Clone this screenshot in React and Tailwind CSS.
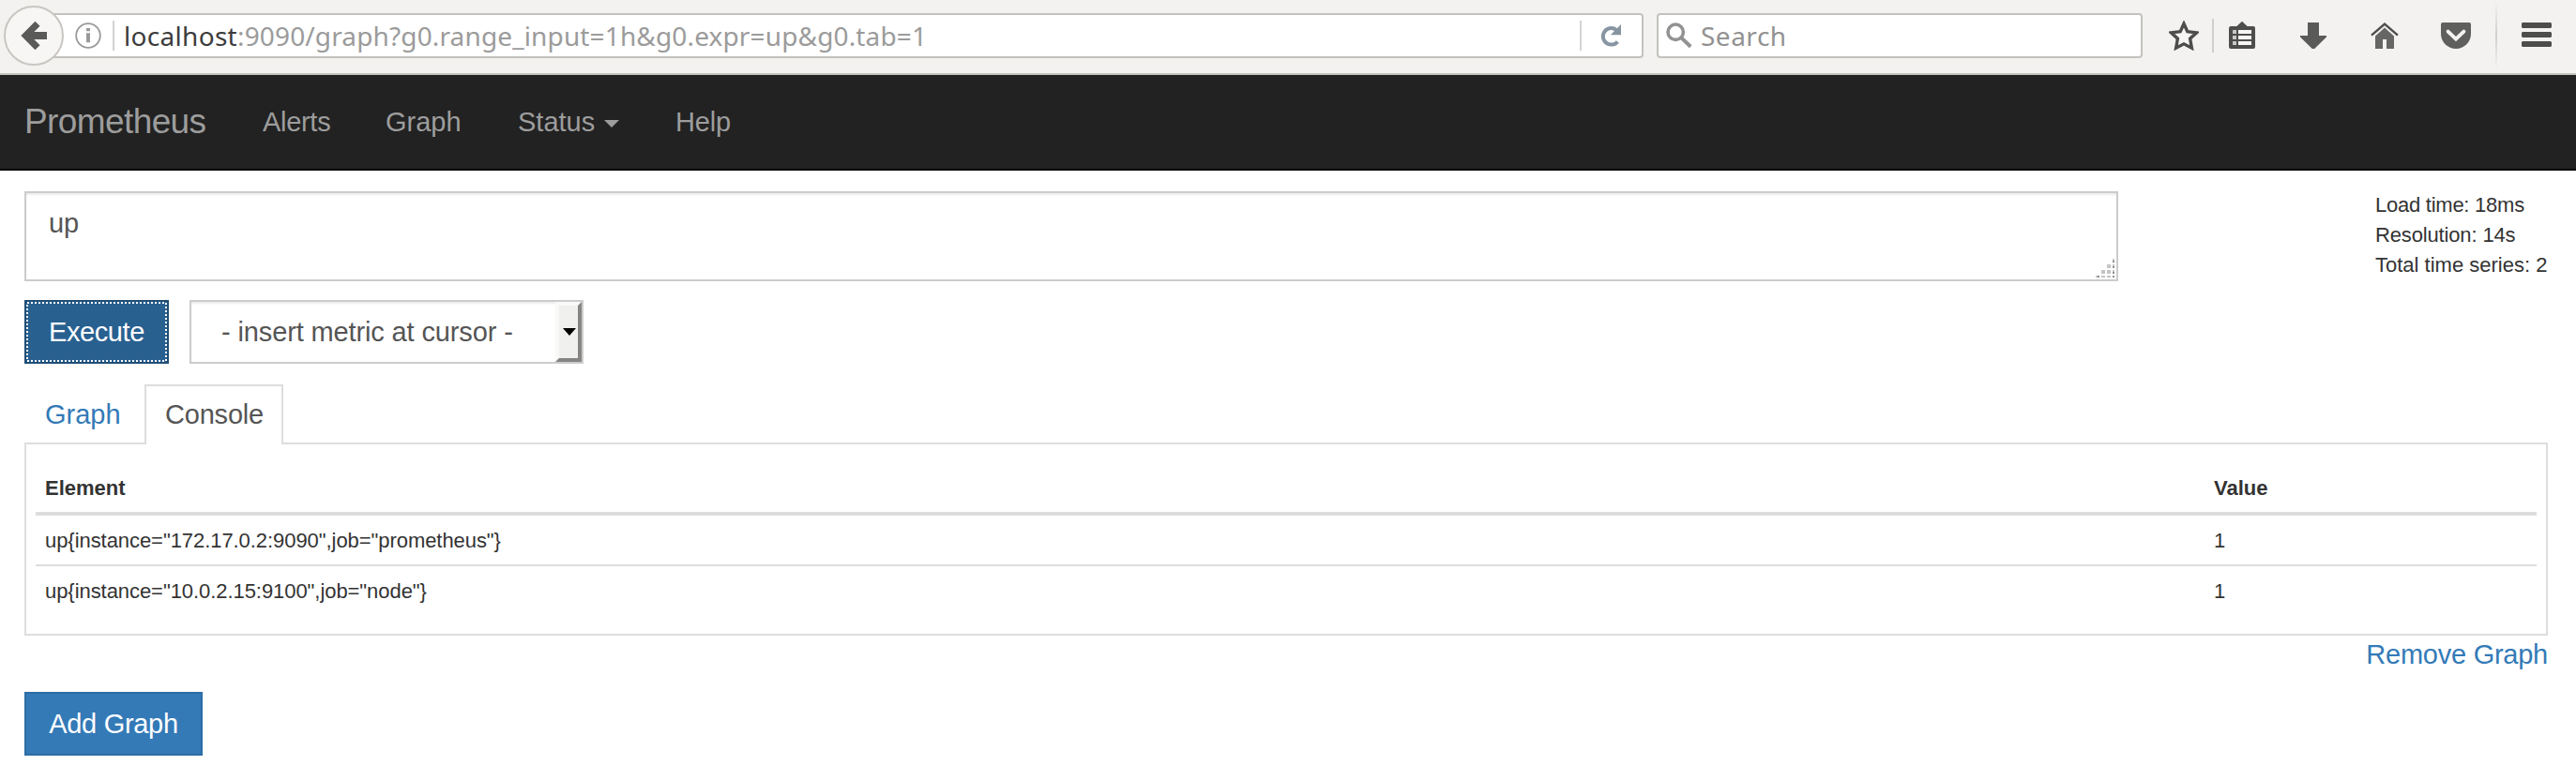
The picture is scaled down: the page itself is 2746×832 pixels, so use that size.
const SANS = "font-['Liberation_Sans',Arial,sans-serif]";
const UI = "font-['Noto_Sans',sans-serif]";

function ToolIcon({ className, children, w = 16, h = 16 }) {
  return (
    <svg className={`shrink-0 ${className}`} viewBox={`0 0 ${w} ${h}`} width={w * 2} height={h * 2}>
      {children}
    </svg>
  );
}

function Toolbar() {
  return (
    <header className={`flex h-[80px] items-start border-b-2 border-[#c4c2be] bg-[#f3f2f0] ${UI}`}>
      <div className="z-10 ml-[4px] mt-[6px] flex h-[64px] w-[64px] shrink-0 items-center justify-center rounded-full border-2 border-[#c9c6c2] bg-[#f7f6f5]">
        <ToolIcon w={14} h={16}>
          <path d="M9 1.6 2.7 8 9 14.4" fill="none" stroke="#5a5a59" strokeWidth="3.6" />
          <path d="M3.6 6h10.4v4H3.6z" fill="#5a5a59" />
        </ToolIcon>
      </div>
      <div className="-ml-[14px] mt-[14px] flex h-[48px] w-[1698px] shrink-0 items-center rounded-r-[4px] border-2 border-[#c4c2be] bg-white">
        <ToolIcon w={14} h={14} className="ml-[24px]">
          <circle cx="7" cy="7" r="6.4" fill="none" stroke="#999" strokeWidth="0.9" />
          <path d="M6 3h2v1.6H6zM6 5.6h2v5H6z" fill="#999" />
        </ToolIcon>
        <div className="ml-[12px] h-[32px] w-[2px] bg-[#d4d4d4]" />
        <div className="ml-[10px] grow whitespace-pre text-[28px] leading-[44px] text-[#9b9b9b]">
          <span className="tracking-[0.3px] text-[#3c3c3c]">localhost</span>
          <span className="tracking-[0.14px]">:9090/graph?g0.range_input=1h&amp;g0.expr=up&amp;g0.tab=1</span>
        </div>
        <div className="mr-[20px] h-[32px] w-[2px] bg-[#d4d4d4]" />
        <ToolIcon w={11} h={12} className="mr-[22px]">
          <path d="M9.2 9.2A4.4 4.4 0 1 1 8.6 3" fill="none" stroke="#8795a3" strokeWidth="2" />
          <path d="M11 0v5.6H5.4z" fill="#8795a3" />
        </ToolIcon>
      </div>
      <div className="ml-[14px] mt-[14px] flex h-[48px] w-[518px] shrink-0 items-center rounded-[4px] border-2 border-[#c4c2be] bg-white">
        <ToolIcon w={14} h={14} className="ml-[8px]">
          <circle cx="5.1" cy="5.1" r="4.1" fill="none" stroke="#929292" strokeWidth="1.8" />
          <path d="m8.2 8.2 4.9 4.7" stroke="#929292" strokeWidth="2" />
        </ToolIcon>
        <span className="ml-[9px] text-[28px] leading-[44px] tracking-[0.5px] text-[#929292]">Search</span>
      </div>
      <ToolIcon className="ml-[28px] mt-[22px]">
        <path
          d="m8 1.6 1.9 4.2 4.9.6-3.5 3.2.9 5L8 12.4l-4.2 2.2.9-5L1.2 6.4l4.9-.6z"
          fill="#f7f6f5"
          stroke="#4d4d4c"
          strokeWidth="1.7"
        />
      </ToolIcon>
      <div className="ml-[14px] mt-[20px] h-[36px] w-[2px] shrink-0 bg-[#d0cfcd]" />
      <ToolIcon w={14} h={15} className="ml-[16px] mt-[22px]">
        <path d="M1 3h3.2L7 .4 9.8 3H13a1 1 0 0 1 1 1v10a1 1 0 0 1-1 1H1a1 1 0 0 1-1-1V4a1 1 0 0 1 1-1z" fill="#4d4d4c" />
        <path d="M2 5h2v2H2zM2 8h2v2H2zM2 11h2v2H2z" fill="#c9c8c7" />
        <path d="M5 5h7v2H5zM5 8h7v2H5zM5 11h7v2H5z" fill="#f7f6f5" />
      </ToolIcon>
      <ToolIcon w={14} h={14} className="ml-[48px] mt-[24px]">
        <path d="M4 0h6v7h4v.8L7.6 14H6.4L0 7.8V7h4z" fill="#5a5a59" />
      </ToolIcon>
      <ToolIcon w={15} h={14} className="ml-[47px] mt-[24px]">
        <path d="M.5 6.8 7.5.8l7 6" fill="none" stroke="#4d4d4c" strokeWidth="1.2" />
        <path d="m7.5 2.8 5 4.4V14h-4V9h-2v5h-4V7.2z" fill="#666665" />
      </ToolIcon>
      <ToolIcon w={16} h={14} className="ml-[45px] mt-[24px]">
        <path d="M1 0h14a1 1 0 0 1 1 1v5a8 8 0 0 1-16 0V1a1 1 0 0 1 1-1z" fill="#5f5f5e" />
        <path d="M3.8 4.8 8 8.8l4.2-4" fill="none" stroke="#f3f2f0" strokeWidth="2" strokeLinecap="round" />
      </ToolIcon>
      <div className="ml-[26px] mt-[2px] h-[72px] w-[2px] shrink-0 bg-linear-to-b from-transparent via-[#cfcecc] to-transparent" />
      <ToolIcon w={16} h={13} className="ml-[26px] mt-[24px]">
        <path
          d="M.5 0h15l.5.5v2l-.5.5H.5L0 2.500v-2zM.5 5h15l.5.5v2l-.5.5H.5L0 7.500v-2zM.5 10h15l.5.5v2l-.5.5H.5l-.5-.5v-2z"
          fill="#4d4d4c"
        />
      </ToolIcon>
    </header>
  );
}

function Navbar() {
  return (
    <nav className="flex h-[102px] items-center border-b-2 border-[#080808] bg-[#222] pl-[26px] text-[#9d9d9d]">
      <a className="w-[254px] text-[37px] tracking-[-0.6px]">Prometheus</a>
      <a className="w-[131px] tracking-[-0.3px]">Alerts</a>
      <a className="w-[141px]">Graph</a>
      <a className="flex w-[168px] items-center">
        <span className="w-[92px]">Status</span>
        <svg className="mt-[4px]" width="16" height="8" viewBox="0 0 16 8">
          <path d="M0 0h16L8 8z" fill="#9d9d9d" />
        </svg>
      </a>
      <a className="tracking-[-0.2px]">Help</a>
    </nav>
  );
}

const rows = [
  { element: 'up{instance="172.17.0.2:9090",job="prometheus"}', value: "1" },
  { element: 'up{instance="10.0.2.15:9100",job="node"}', value: "1" },
];

export default function App() {
  return (
    <div className={`h-[832px] w-[2746px] overflow-hidden bg-white text-[29px] leading-[40px] text-[#333] ${SANS}`}>
      <Toolbar />
      <Navbar />
      <main className="pl-[26px] pr-[30px] pt-[22px]">
        <div className="flex justify-between">
          <div className="flex h-[96px] w-[2232px] items-start justify-between border-2 border-[#ccc] pl-[24px] text-[#555] shadow-[inset_0_2px_2px_rgba(0,0,0,0.075)]">
            <span className="mt-[12px] tracking-[-0.1px]">up</span>
            <svg className="self-end" width="22" height="24" viewBox="0 0 22 24" shapeRendering="crispEdges">
              <path
                d="M18 2h2v2h-2zM12 8h4v4h-4zM18 8h2v4h-2zM6 14h4v4H6zM12 14h4v4h-4zM18 14h2v4h-2zM0 20h4v2H0zM6 20h4v2H6zM12 20h4v2h-4zM18 20h2v2h-2z"
                fill="#c4c4c4"
              />
              <path d="M18 4h2v2h-2zM18 10h2v2h-2zM18 16h2v2h-2zM2 20h2v2H2zM18 20h2v2h-2z" fill="#8f8f8f" />
            </svg>
          </div>
          <div className="-mt-px w-[184px] whitespace-nowrap text-[22px] leading-[32px]">
            <div className="tracking-[-0.25px]">Load time: 18ms</div>
            <div className="tracking-[-0.15px]">Resolution: 14s</div>
            <div>Total time series: 2</div>
          </div>
        </div>

        <div className="mt-[20px] flex gap-[22px]">
          <button className="relative h-[68px] w-[154px] border-2 border-[#204d74] bg-[#286090] tracking-[-0.4px] text-white">
            Execute
            <svg className="absolute inset-0" width="150" height="64" shapeRendering="crispEdges">
              <rect x="1" y="1" width="148" height="62" fill="none" stroke="#fff" strokeWidth="2" strokeDasharray="2 2" />
            </svg>
          </button>
          <div className="flex h-[68px] w-[420px] items-center justify-between border-2 border-[#ccc] pl-[32px] text-[#555] shadow-[inset_0_2px_2px_rgba(0,0,0,0.075)]">
            <span className="whitespace-nowrap tracking-[-0.13px]">- insert metric at cursor -</span>
            <div className="flex h-full w-[28px] items-center border-4 border-b-[#868583] border-l-[#f9f9f8] border-r-[#868583] border-t-[#f9f9f8] bg-[#f0f0ef] pl-[4px]">
              <svg width="14" height="8" viewBox="0 0 14 8">
                <path d="M0 0h14L7 8z" fill="#000" />
              </svg>
            </div>
          </div>
        </div>

        <div className="mt-[22px] flex h-[64px]">
          <a className="w-[128px] border-b-2 border-[#ddd] pl-[22px] pt-[12px] text-[#337ab7]">Graph</a>
          <a className="w-[148px] border-2 border-b-0 border-[#ddd] pl-[20px] pt-[10px] tracking-[-0.2px] text-[#555]">Console</a>
          <div className="grow border-b-2 border-[#ddd]" />
        </div>
        <section className="h-[204px] border-2 border-t-0 border-[#ddd] px-[10px] pt-[16px] text-[22px] leading-[32px]">
          <div className="grid h-[60px] grid-cols-[2312px_1fr] items-start border-b-4 border-[#ddd] pl-[10px] pt-[15px] font-bold">
            <span>Element</span>
            <span>Value</span>
          </div>
          {rows.map((r, i) => (
            <div
              key={r.element}
              className={`grid grid-cols-[2312px_1fr] items-start pl-[10px] pt-[11px] tracking-[-0.06px] ${i === 0 ? "h-[54px] border-b-2 border-[#ddd]" : ""}`}
            >
              <span>{r.element}</span>
              <span>{r.value}</span>
            </div>
          ))}
        </section>
        <div className="flex h-[40px] justify-end text-[#337ab7]">
          <a className="tracking-[-0.25px]">Remove Graph</a>
        </div>
        <button className="mt-[20px] h-[68px] w-[190px] border-2 border-[#2e6da4] bg-[#337ab7] tracking-[-0.3px] text-white">Add Graph</button>
      </main>
    </div>
  );
}
